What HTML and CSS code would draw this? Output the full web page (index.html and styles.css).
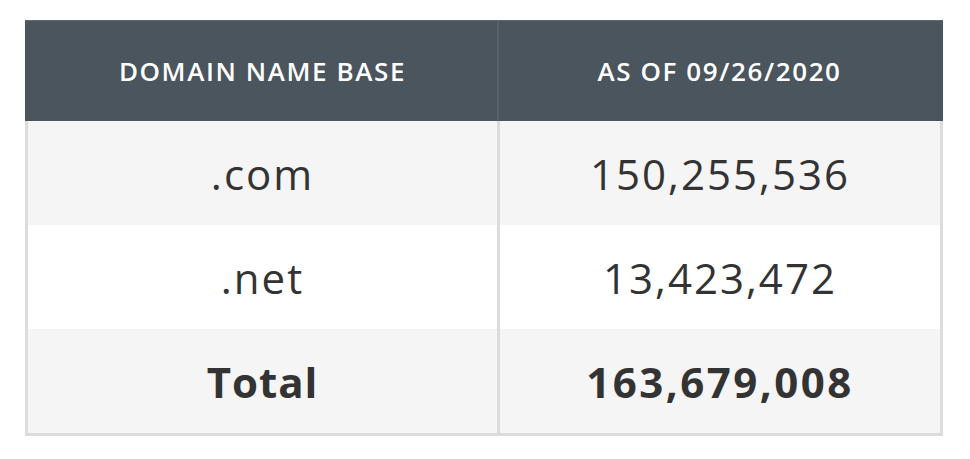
FILE: index.html
```html
<!DOCTYPE html>
<html lang="en">
<head>
<meta charset="utf-8">
<title>Domain Name Base</title>
<link rel="stylesheet" href="styles.css">
</head>
<body>
<div class="table">
  <div class="head">
    <div class="hcell hleft">DOMAIN NAME BASE</div>
    <div class="hdiv"></div>
    <div class="hcell hright">AS OF 09/26/2020</div>
  </div>
  <div class="body">
    <div class="row alt">
      <div class="cell left">.com</div>
      <div class="cell right">150,255,536</div>
    </div>
    <div class="row">
      <div class="cell left">.net</div>
      <div class="cell right">13,423,472</div>
    </div>
    <div class="row alt total">
      <div class="cell left">Total</div>
      <div class="cell right">163,679,008</div>
    </div>
  </div>
</div>
</body>
</html>
```
FILE: styles.css
```css
html, body {
  margin: 0;
  padding: 0;
  background: #ffffff;
}
body {
  font-family: "Open Sans", "DejaVu Sans", sans-serif;
}
.table {
  width: 918px;
  margin: 20px 0 0 25px;
}
.head {
  display: flex;
  height: 101px;
  background: #4b555e;
  border-top: 1px solid #5c666f;
  box-sizing: border-box;
}
.hcell {
  display: flex;
  align-items: center;
  justify-content: center;
  color: #ffffff;
  font-weight: 600;
  font-size: 26px;
  letter-spacing: 1.6px;
}
.hleft {
  width: 472px;
  padding-left: 3px;
  box-sizing: border-box;
}
.hdiv {
  width: 2px;
  background: #56606a;
}
.hright {
  flex: 1;
  padding-right: 3px;
}
.body {
  border: 3px solid #dcdcdc;
  border-top: none;
}
.row {
  display: flex;
  height: 104px;
  background: #ffffff;
}
.row.alt {
  background: #f5f5f5;
}
.cell {
  display: flex;
  align-items: center;
  justify-content: center;
  color: #333333;
  font-size: 42px;
  letter-spacing: 2px;
}
.left {
  width: 469px;
  border-right: 3px solid #dcdcdc;
}
.right {
  flex: 1;
}
.total .cell {
  font-weight: 700;
  letter-spacing: 1px;
}
.total .right {
  letter-spacing: 2.5px;
}
```
